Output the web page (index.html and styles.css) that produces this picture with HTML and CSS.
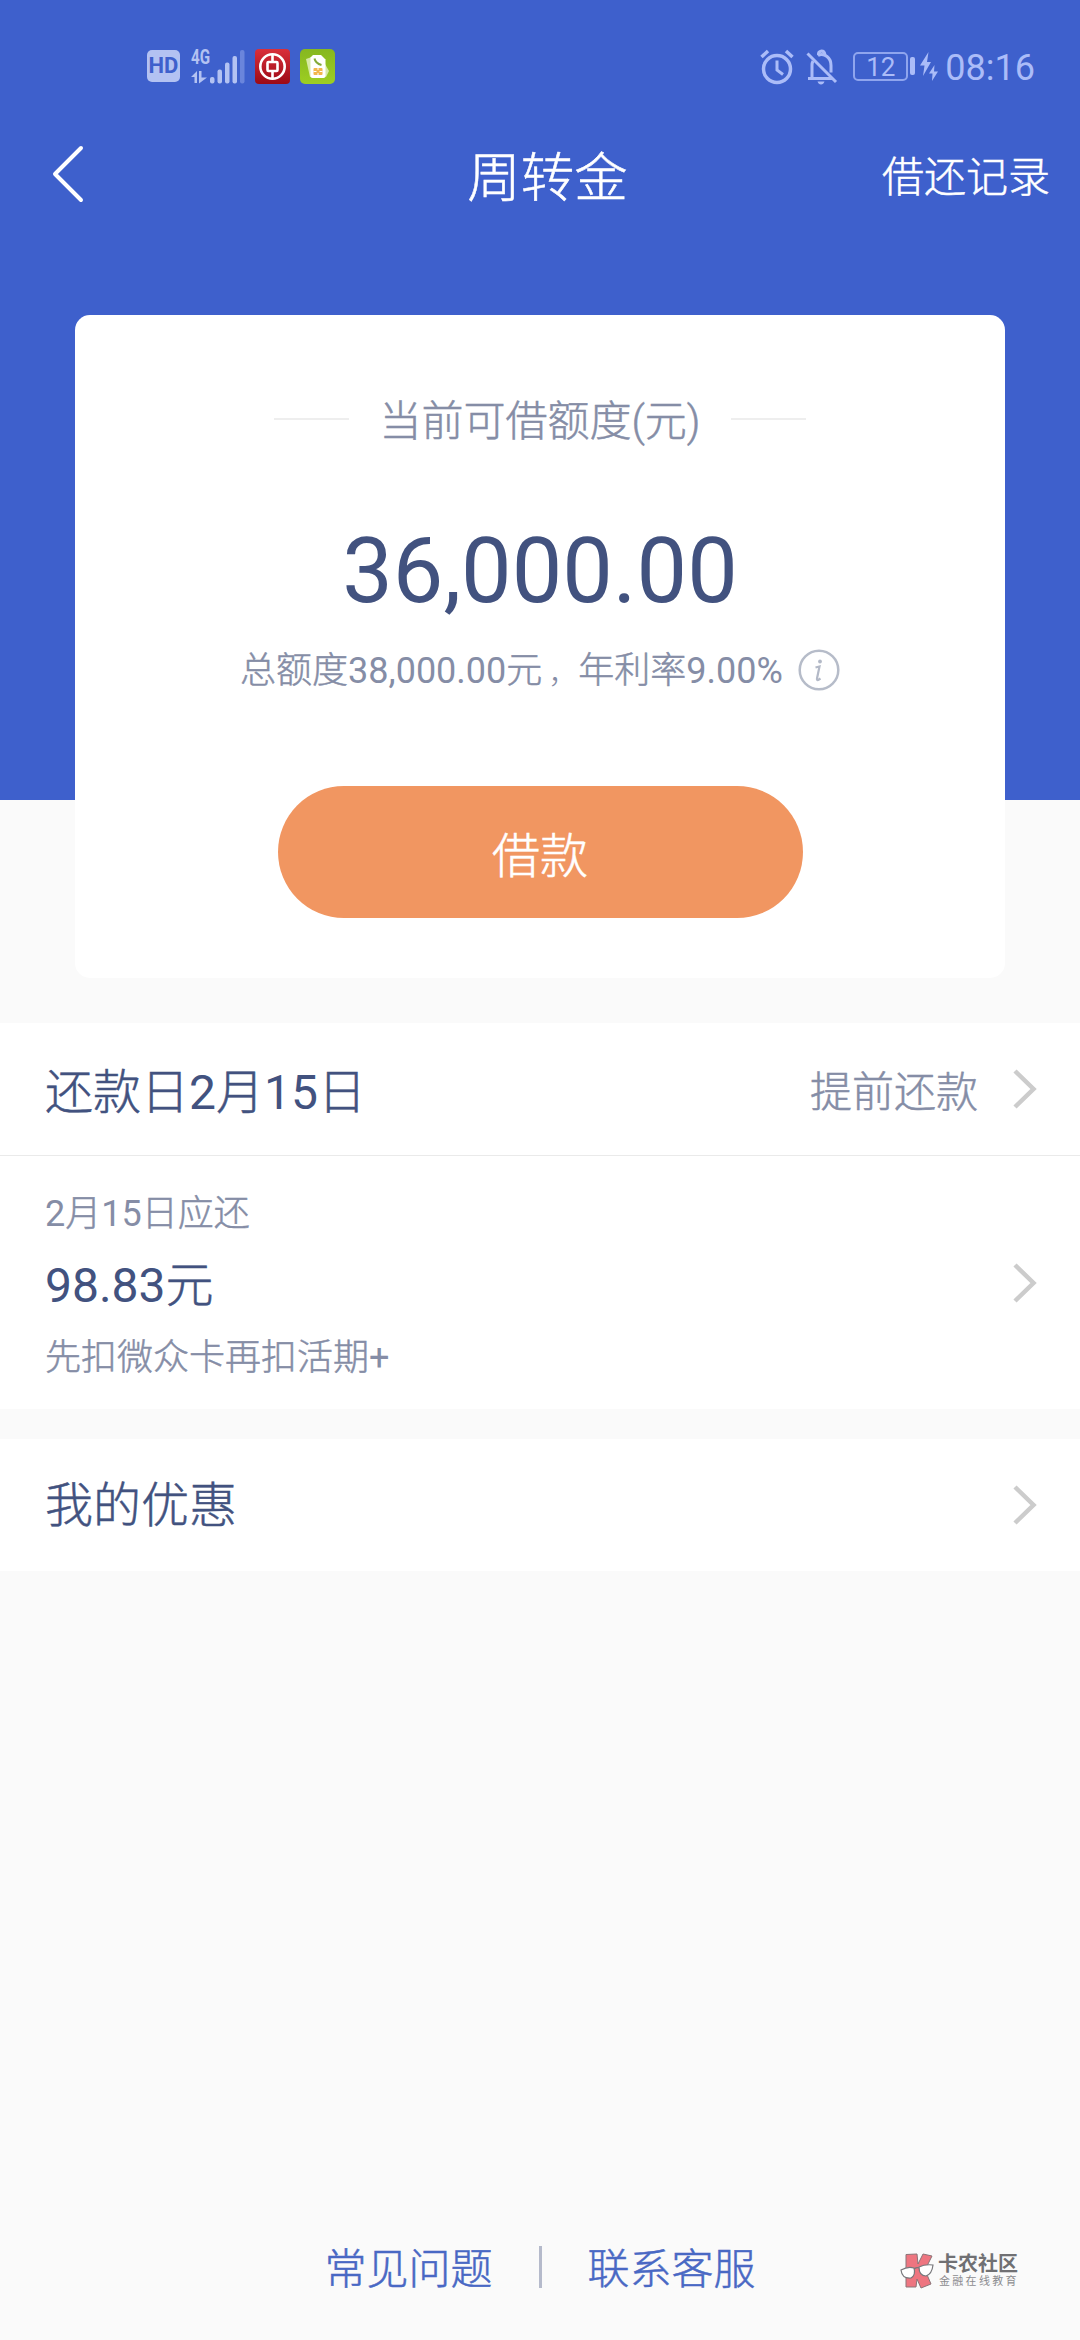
FILE: index.html
```html
<!DOCTYPE html>
<html lang="zh-CN">
<head>
<meta charset="utf-8">
<title>周转金</title>
<link rel="stylesheet" href="styles.css">
</head>
<body>
<div class="page">
  <section class="hero">
    <div class="status">
      <div class="status-left">
        <div class="hd">HD</div>
        <div class="signal">
          <span class="net">4G</span>
          <svg width="54" height="36" viewBox="0 0 54 36">
            <g fill="#b3c2f2">
              <path d="M0 28 L6 22 V34 H3.500 V28 Z"/>
              <path d="M8 22 H10.500 V28.500 H16 L8 34.500 Z"/>
              <rect x="19" y="28" width="4.500" height="6.500" rx="2"/>
              <rect x="26.500" y="20.500" width="4.500" height="14" rx="2"/>
              <rect x="34" y="13.500" width="4.500" height="21" rx="2"/>
              <rect x="41.500" y="7" width="4.500" height="27.500" rx="2"/>
            </g>
            <rect x="49" y="1" width="4.500" height="33.500" rx="2" fill="#6a85dc"/>
          </svg>
        </div>
        <svg class="app-bank" width="35" height="35" viewBox="0 0 35 35">
          <defs><linearGradient id="red" x2="0" y2="1"><stop stop-color="#d92f3a"/><stop offset="1" stop-color="#9c0a16"/></linearGradient></defs>
          <rect width="35" height="35" rx="4" fill="url(#red)"/>
          <g fill="none" stroke="#fff" stroke-width="2.600"><circle cx="17.500" cy="17.500" r="12.200"/><rect x="12.500" y="13" width="10" height="9" rx="1"/><path d="M17.500 5.500V13M17.500 22v7.500"/></g>
        </svg>
        <svg width="35" height="35" viewBox="0 0 35 35">
          <defs><linearGradient id="green" x2="0" y2="1"><stop stop-color="#86b71f"/><stop offset="1" stop-color="#9dce22"/></linearGradient></defs>
          <rect width="35" height="35" rx="5" fill="url(#green)"/>
          <path d="M6 10l6-2 13 7 4 7-3 6-5-2-11 2z" fill="#d7e9a6"/>
          <path d="M13 6h8l4.500 4.500V27q0 2-2 2H12.500q-2 0-2-2V8.500z" fill="#fff"/>
          <path d="M14.500 9.500q1 5 7 6.500" fill="none" stroke="#84aa38" stroke-width="2"/>
          <rect x="13.500" y="19" width="9" height="7" rx="1" fill="#f2b64c"/><path d="M13.500 22.500h3M19.500 22.500h3M18 19v2M18 24v2" stroke="#fff"/>
        </svg>
      </div>
      <div class="status-right">
        <svg width="34" height="36" viewBox="0 0 34 36" fill="none" stroke="#abbcf8" stroke-width="3.500">
          <circle cx="17" cy="20" r="13.500"/><path d="M17 11.500V21l6 4.500" stroke-width="3"/><path d="M1.500 8L8 2M32.500 8L26 2"/>
        </svg>
        <svg class="bell" width="32" height="36" viewBox="0 0 32 36" fill="none" stroke="#abbcf8" stroke-width="3">
          <path d="M2 29.500H26M6 28V16q0-2 1-4M12 6.500Q16.500 4 21 7.500q4 3 4 9v7"/><path d="M12.500 6q-.5-3.500 3-4 3 0 3.500 4"/><path d="M1.500 4.500L30 33"/><path d="M11.500 32.500h7q-1 3-3.500 3t-3.500-3" fill="#abbcf8" stroke="none"/>
        </svg>
        <div class="battery">12</div>
        <div class="battery-tip"></div>
        <svg class="bolt" width="18" height="30" viewBox="0 0 18 30" fill="#abbcf8"><path d="M8.500 0L0 13.500h4.500L3 24l8-14H7z"/><path d="M14.500 13L9 21.500h3.500L12 29l6-9.500h-4z"/></svg>
        <div class="time">08:16</div>
      </div>
    </div>

    <nav class="nav">
      <svg class="back" width="32" height="58" viewBox="0 0 32 58"><path d="M29 3L3 29l26 26" fill="none" stroke="#fff" stroke-width="4" stroke-linecap="round" stroke-linejoin="round"/></svg>
      <h1 class="title">周转金</h1>
      <a class="records">借还记录</a>
    </nav>

    <div class="card">
      <div class="label"><span class="rule"></span><span class="label-text">当前可借额度(元)</span><span class="rule"></span></div>
      <div class="amount">36,000.00</div>
      <div class="summary">
        <span class="summary-text">总额度<span class="num">38,000.00</span>元<span class="comma">，</span>年利率<span class="num">9.00%</span></span>
        <svg width="42" height="42" viewBox="0 0 42 42"><circle cx="21" cy="21" r="19.300" fill="none" stroke="#b6bcc9" stroke-width="2.500"/><circle cx="22" cy="12.500" r="1.900" fill="#b3b9c7"/><path d="M17.500 18.500l4-1-2.500 12q-.3 2 1.200 1.500l2.300-1.500" fill="none" stroke="#b3b9c7" stroke-width="2.200"/></svg>
      </div>
      <div class="borrow">借款</div>
    </div>
  </section>

  <section class="group">
    <div class="row row-head">
      <span class="row-title">还款日<span class="num">2</span>月<span class="num">15</span>日</span>
      <span class="early">提前还款</span>
      <svg class="chevron" width="24" height="42" viewBox="0 0 24 42"><path d="M2 3l18.500 18L2 39"/></svg>
    </div>
    <div class="row row-bill">
      <div class="bill">
        <div class="bill-note"><span class="num">2</span>月<span class="num">15</span>日应还</div>
        <div class="bill-sum"><span class="num">98.83</span>元</div>
        <div class="bill-note">先扣微众卡再扣活期<span class="num">+</span></div>
      </div>
      <svg class="chevron" width="24" height="42" viewBox="0 0 24 42"><path d="M2 3l18.500 18L2 39"/></svg>
    </div>
  </section>

  <section class="group">
    <div class="row row-offers">
      <span class="row-title">我的优惠</span>
      <svg class="chevron" width="24" height="42" viewBox="0 0 24 42"><path d="M2 3l18.500 18L2 39"/></svg>
    </div>
  </section>

  <footer class="footer">
    <a>常见问题</a><span class="bar"></span><a>联系客服</a>
    <div class="brand">
      <svg width="35" height="37" viewBox="0 0 35 37">
        <path d="M6 1.500L17 1l1 10 5-10 9 2-7 14 6 14-10 4-4-9-1 8H6z" fill="#ee7580" stroke="#8b7478" stroke-width="1"/>
        <g fill="#fff" stroke="#77777b" stroke-width="1.200"><path d="M1 17q7-4 13-2 2 7-3 10-9 1-10-8z"/><path d="M19 14q6-3 14-2-1 9-7 11-7 0-7-9z"/><path d="M14 16q3-2 5-1" fill="none"/></g>
      </svg>
      <div><div class="brand-name">卡农社区</div><div class="brand-sub">金融在线教育</div></div>
    </div>
  </footer>
</div>
</body>
</html>
```
FILE: styles.css
```css
* { box-sizing: border-box; }
body { margin: 0; background: #fafafa; font-family: Roboto, "Noto Sans CJK SC", sans-serif; font-weight: 400; }
svg { display: block; flex: none; }
.page { width: 1080px; height: 2340px; display: flex; flex-direction: column; overflow: hidden; }

.title, .records, .label, .summary, .borrow, .row, .footer > a { font-weight: 300; -webkit-text-stroke: .5px currentColor; }
.num { font-weight: 400; -webkit-text-stroke: 0; }

.hero { height: 1023px; background: linear-gradient(#3e60cc 800px, #fafafa 800px); flex: none; }

.status { height: 132px; padding: 49px 45px 0 147px; display: flex; justify-content: space-between; align-items: flex-start; }
.status-left, .status-right { display: flex; align-items: flex-start; }
.hd { width: 33px; height: 32px; margin-top: 1px; border-radius: 5px; background: #b3c2f2; color: #3e60cc; font: 700 22px/32px Roboto, sans-serif; text-align: center; }
.signal { position: relative; width: 54px; margin: 0 11px; }
.net { position: absolute; left: 0; top: -1px; font: 700 20px/19px Roboto, sans-serif; color: #b3c2f2; transform: scaleX(.76); transform-origin: left; }
.app-bank { margin: 0 9.5px 0 -1px; }
.bell { margin: 0 15px 0 12px; }
.battery { width: 55px; height: 29px; margin-top: 3px; border: 2px solid #8fa5ee; border-radius: 5px; color: #abbcf8; font-size: 26px; line-height: 26px; text-align: center; }
.battery-tip { width: 5px; height: 18px; margin: 8px 5px 0 2px; border-radius: 2px; background: #abbcf8; }
.bolt { margin: 3px 7px 0 0; }
.time { color: #abbcf8; font-size: 36px; line-height: 38px; }

.nav { height: 92px; display: grid; grid-template-columns: 1fr auto 1fr; align-items: center; padding: 0 30px 0 52px; color: #fff; }
.back { margin-top: -8px; }
.title { margin: 0; padding: 2px 7px 0 0; font-size: 53.500px; line-height: 90px; }
.records { justify-self: end; font-size: 42px; line-height: 90px; }

.card { width: 930px; height: 663px; margin: 91px auto 0; border-radius: 15px; background: #fff; display: flex; flex-direction: column; align-items: center; color: #858da6; }
.label { display: flex; align-items: center; height: 60px; margin-top: 75px; font-size: 42px; line-height: 60px; }
.label-text { padding: 4px 30px 0; }
.rule { width: 75px; height: 2px; margin-top: -3px; background: #eee; }
.amount { margin-top: 61px; height: 120px; font-size: 90px; line-height: 122px; color: #42527f; }
.summary { display: flex; align-items: center; gap: 15px; height: 50px; margin-top: 14px; font-size: 36px; line-height: 50px; }
.summary-text { padding-top: 4px; }
.comma { padding-left: 6px; font-size: 30px; -webkit-text-stroke: 0; }
.borrow { width: 525px; height: 132px; margin-top: 91px; padding-top: 5px; border-radius: 66px; background: #f19661; color: #fff; font-size: 48px; line-height: 132px; text-align: center; }

.group { flex: none; background: #fff; margin-bottom: 30px; color: #42527f; }
.row { display: flex; align-items: center; padding: 0 43px 0 45px; }
.row-head { height: 133px; border-bottom: 1px solid #eaeaea; }
.row-head .row-title { padding-top: 7px; }
.row-title { flex: 1; font-size: 48px; line-height: 60px; }
.early { color: #858da6; font-size: 42px; line-height: 60px; padding-top: 8px; margin-right: 35px; }
.row-bill { height: 253px; }
.bill { flex: 1; padding-top: 6px; }
.bill-note { font-size: 36px; line-height: 60px; color: #858da6; }
.bill-sum { font-size: 48px; line-height: 84px; }
.row-offers { height: 132px; }
.row-offers .row-title { padding-top: 2px; }
.chevron path { fill: none; stroke: #ccc; stroke-width: 4.500; }

.footer { margin-top: auto; height: 142px; position: relative; display: flex; justify-content: center; align-items: flex-start; padding-top: 42px; color: #4968c4; font-size: 42px; line-height: 60px; }
.bar { width: 3px; height: 42px; margin: 6px 46px 0; background: #b5bacb; }
.brand { position: absolute; left: 900px; top: 55px; display: flex; gap: 3px; }
.brand-name { font-size: 20px; line-height: 22px; font-weight: 700; color: #707073; }
.brand-sub { padding-left: 1px; font-size: 11px; line-height: 14px; letter-spacing: 2.300px; color: #8c8c90; white-space: nowrap; }
```
